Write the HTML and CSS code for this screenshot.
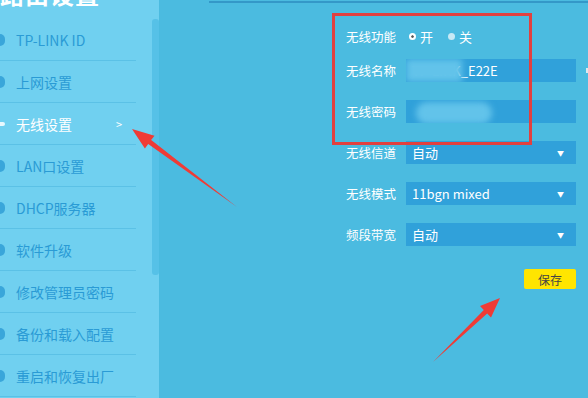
FILE: index.html
```html
<!DOCTYPE html>
<html lang="zh-CN">

<head>
    <meta charset="UTF-8">
    <meta name="viewport" content="width=device-width, initial-scale=1.0">
    <title>无线设置</title>
    <link rel="stylesheet" href="styles.css">
</head>

<body>
    <div class="page">
        <!-- Sidebar -->
        <div class="sidebar">
            <div class="menu">
                <div class="title"><span>路由设置</span></div>
                <ul class="nav">
                    <li><i class="ico"></i>TP-LINK ID</li>
                    <li><i class="ico"></i>上网设置</li>
                    <li class="active"><i class="ico"></i>无线设置<span class="more">&gt;</span></li>
                    <li><i class="ico"></i>LAN口设置</li>
                    <li><i class="ico"></i>DHCP服务器</li>
                    <li><i class="ico"></i>软件升级</li>
                    <li><i class="ico"></i>修改管理员密码</li>
                    <li><i class="ico"></i>备份和载入配置</li>
                    <li><i class="ico"></i>重启和恢复出厂</li>
                </ul>
            </div>
            <div class="scrollbar"></div>
        </div>

        <!-- Wireless settings -->
        <div class="main">
            <div class="topline"></div>
            <div class="form">
                <div class="row first">
                    <label>无线功能</label>
                    <div class="radios">
                        <span class="radio on"></span>开
                        <span class="radio"></span>关
                    </div>
                </div>
                <div class="row">
                    <label>无线名称</label>
                    <div class="field">TP-LINK_E22E<span class="smudge"></span></div>
                    <span class="eye"></span>
                </div>
                <div class="row">
                    <label>无线密码</label>
                    <div class="field"><span class="smudge round"></span></div>
                </div>
                <div class="row">
                    <label>无线信道</label>
                    <div class="field select">自动<span class="caret">&#9660;</span></div>
                </div>
                <div class="row">
                    <label>无线模式</label>
                    <div class="field select">11bgn mixed<span class="caret">&#9660;</span></div>
                </div>
                <div class="row">
                    <label>频段带宽</label>
                    <div class="field select">自动<span class="caret">&#9660;</span></div>
                </div>
                <div class="actions">
                    <button type="button">保存</button>
                </div>
            </div>
        </div>

        <!-- Annotations -->
        <div class="mark-box"></div>
        <svg class="marks" width="588" height="398" viewBox="0 0 588 398">
            <polygon points="237,207 151.2,140.1 154.5,135.7 132,129 144.9,148.5 148.2,144.1" />
            <polygon points="433,362 483.8,310 480,306 500,298 491,317.6 487.2,313.6" />
        </svg>
    </div>
</body>

</html>
```

FILE: styles.css
```css
* {
    margin: 0;
    padding: 0;
    box-sizing: border-box;
}

body {
    font-family: "Noto Sans CJK SC", "Noto Sans", sans-serif;
    background-color: #4bbbe0;
    overflow: hidden;
}

.page {
    position: relative;
    display: flex;
    width: 588px;
    height: 398px;
}

/* sidebar */
.sidebar {
    display: flex;
    width: 162px;
    height: 398px;
    background-color: #70d0f0;
}

.menu {
    width: 136px;
}

.title {
    height: 19px;
    overflow: hidden;
}

.title span {
    display: block;
    margin-top: -20px;
    font-size: 24px;
    font-weight: bold;
    line-height: 28px;
    color: #fff;
    letter-spacing: 1px;
}

.nav {
    list-style: none;
}

.nav li {
    display: flex;
    align-items: center;
    height: 42px;
    border-bottom: 1px solid #5bc1e6;
    font-size: 14px;
    color: #2a9bd5;
}

.nav li.active {
    color: #fff;
}

.ico {
    width: 5px;
    height: 12px;
    margin-right: 11px;
    border-radius: 0 6px 6px 0;
    background-color: #3aa6da;
}

.nav li.active .ico {
    background-color: #e8f8fe;
    height: 4px;
}

.more {
    margin-left: auto;
    margin-right: 14px;
    font-size: 11px;
    color: #fff;
}

.scrollbar {
    width: 7px;
    height: 256px;
    margin-top: 19px;
    margin-left: 16px;
    border-radius: 3px;
    background-color: #56c1e7;
}

/* main */
.main {
    flex: 1;
}

.topline {
    height: 2px;
    margin-top: 1px;
    margin-left: 50px;
    background-color: #3498c8;
}

.form {
    padding-left: 187px;
    padding-top: 22px;
}

.row {
    display: flex;
    align-items: center;
    height: 23px;
    margin-bottom: 18px;
}

.row.first {
    margin-bottom: 11px;
}

.row label {
    width: 60px;
    font-size: 12.5px;
    color: #fff;
}

.radios {
    display: flex;
    align-items: center;
    font-size: 13px;
    color: #fff;
}

.radio {
    width: 7px;
    height: 7px;
    margin: 0 4px 0 3px;
    border-radius: 50%;
    background-color: #c7e9f5;
}

.radio.on {
    background-color: #fff;
    border: 2px solid #fff;
    box-shadow: inset 0 0 0 2px #555;
}

.radios .radio:last-child {
    margin-left: 15px;
}

.field {
    position: relative;
    display: flex;
    align-items: center;
    width: 170px;
    height: 23px;
    padding-left: 6px;
    background-color: #30a1da;
    font-size: 13px;
    color: #fff;
    overflow: hidden;
}

.smudge {
    position: absolute;
    left: 0;
    top: 0;
    width: 56px;
    height: 23px;
    background-color: #62c3ea;
    filter: blur(3px);
}

.smudge.round {
    left: 10px;
    top: 2px;
    width: 76px;
    height: 22px;
    border-radius: 11px;
}

.caret {
    margin-left: auto;
    margin-right: 12px;
    font-size: 7px;
}

.eye {
    width: 6px;
    height: 5px;
    margin-left: 10px;
    background-color: #dde9ee;
}

.actions {
    display: flex;
    padding-left: 178px;
    margin-top: 23px;
}

button {
    width: 52px;
    height: 20px;
    border: none;
    border-radius: 2px;
    background-color: #ffe500;
    font-family: inherit;
    font-size: 12px;
    color: #444;
}

/* annotations */
.mark-box {
    position: absolute;
    left: 332px;
    top: 13px;
    width: 200px;
    height: 132px;
    border: 3px solid #e2403f;
}

.marks {
    position: absolute;
    left: 0;
    top: 0;
    pointer-events: none;
}

.marks polygon {
    fill: #ef3b36;
}
```
